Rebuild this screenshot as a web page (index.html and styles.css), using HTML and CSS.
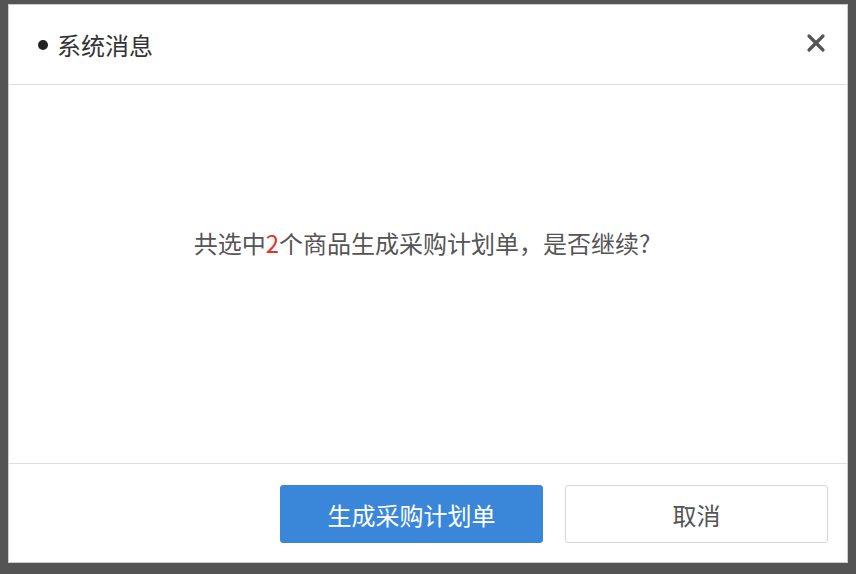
FILE: index.html
```html
<!DOCTYPE html>
<html lang="zh-CN">
<head>
    <meta charset="UTF-8">
    <meta name="viewport" content="width=device-width, initial-scale=1.0">
    <title>系统消息</title>
    <link rel="stylesheet" href="styles.css">
</head>
<body>
<div class="dialog">
    <!-- 标题栏 -->
    <div class="dialog-head">
        <span class="dot"></span>
        <span class="dialog-title">系统消息</span>
        <a href="#" class="close">
            <svg width="20" height="20" viewBox="0 0 20 20">
                <path d="M3 3 L17 17 M17 3 L3 17" stroke="#555" stroke-width="3.2" stroke-linecap="round" fill="none"/>
            </svg>
        </a>
    </div>
    <!-- 内容 -->
    <div class="dialog-body">
        <p class="message">共选中<span class="num">2</span>个商品生成采购计划单，是否继续?</p>
    </div>
    <!-- 按钮 -->
    <div class="dialog-foot">
        <a href="#" class="button button-primary">生成采购计划单</a>
        <a href="#" class="button">取消</a>
    </div>
</div>
</body>
</html>
```

FILE: styles.css
```css
html, body {
    margin: 0;
    padding: 0;
}
body {
    background-color: #545454;
    font-family: "Noto Sans CJK SC", "Liberation Sans", sans-serif;
    padding: 4px 8px 0 8px;
}
.dialog {
    width: 838px;
    height: 557px;
    background-color: #fff;
    border: 1px solid #ccc;
    display: flex;
    flex-direction: column;
}
.dialog-head {
    height: 79px;
    border-bottom: 1px solid #ddd;
    display: flex;
    align-items: center;
    padding: 0 21px 0 29px;
}
.dot {
    width: 10px;
    height: 10px;
    border-radius: 50%;
    background-color: #222;
    margin-right: 9px;
}
.dialog-title {
    font-size: 24px;
    color: #333;
    flex: 1;
}
.close {
    display: flex;
    margin-top: -4px;
}
.dialog-body {
    flex: 1;
    text-align: center;
    padding-right: 12px;
}
.message {
    margin: 146px 0 0 0;
    font-size: 24px;
    line-height: 24px;
    color: #555;
}
.num {
    color: #e5352b;
}
.dialog-foot {
    height: 99px;
    border-top: 1px solid #ddd;
    display: flex;
    justify-content: flex-end;
    padding: 21px 19px 0 0;
    box-sizing: border-box;
    gap: 22px;
}
.button {
    display: flex;
    align-items: center;
    justify-content: center;
    width: 261px;
    height: 56px;
    border: 1px solid #d6d6d6;
    border-radius: 3px;
    background-color: #fff;
    color: #555;
    font-size: 24px;
    text-decoration: none;
}
.button-primary {
    background-color: #3a87da;
    border-color: #3a87da;
    color: #fff;
}
```
